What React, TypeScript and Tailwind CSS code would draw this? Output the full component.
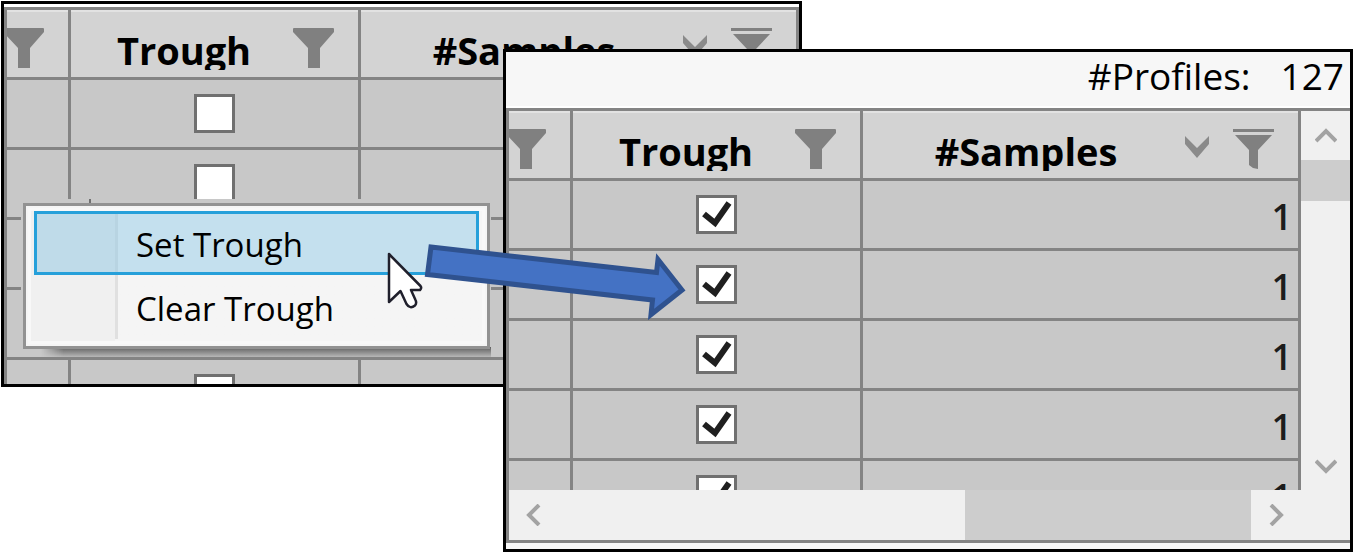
import clsx from "clsx";

interface CheckProps {
  label: string;
  checked: boolean;
}

interface GridProps {
  name: string;
  rows: number;
  checked: boolean;
  samples?: number;
}

const FunnelIcon = () => (
  <svg width="41" height="40" viewBox="0 0 41 40" className="shrink-0" fill="#808080">
    <path d="M1 0H40Q41 0 41 1V4L27 20V40H15V20L0 4V1Q0 0 1 0Z" />
  </svg>
);

const ActiveFunnelIcon = () => (
  <svg width="41" height="40" viewBox="0 0 41 40" className="shrink-0" fill="#808080">
    <path d="M0 0H41V3H0Z" />
    <path d="M2 6H39L25 21V40L20 39L16 36V21Z" />
  </svg>
);

const SortIcon = () => (
  <svg width="24" height="26" viewBox="0 0 24 26" className="shrink-0" fill="#8a8a8a">
    <path d="M0 0L12 12L24 0V8L12 22L0 8Z" />
  </svg>
);

const arrowTurns = {
  up: "",
  right: "rotate-90",
  down: "rotate-180",
  left: "-rotate-90",
};

const ScrollArrow = ({ direction }: { direction: keyof typeof arrowTurns }) => (
  <button
    type="button"
    aria-label={`Scroll ${direction}`}
    className="flex size-[49px] shrink-0 items-center justify-center"
  >
    <svg
      width="22"
      height="16"
      viewBox="0 0 22 16"
      className={arrowTurns[direction]}
      fill="none"
      stroke="#a3a3a3"
      strokeWidth="4"
    >
      <path d="M1 13L11 3L21 13" />
    </svg>
  </button>
);

const Check = ({ label, checked }: CheckProps) => (
  <label className="relative mx-auto block h-[39px] w-[41px]">
    <input
      type="checkbox"
      aria-label={label}
      defaultChecked={checked}
      className="peer block h-full w-full appearance-none border-3 border-[#707070] bg-white"
    />
    <svg
      viewBox="0 0 41 39"
      className="pointer-events-none absolute inset-0 hidden peer-checked:block"
      fill="none"
      stroke="#1f1f1f"
      strokeWidth="6"
    >
      <path d="M8 19L19 28L33 8" />
    </svg>
  </label>
);

const cell = "h-[70px] border-r-3 border-b-3 border-[#848484] p-0";
const headContent =
  "flex h-[67px] items-center overflow-hidden border-t-2 border-[#e2e2e2] pt-[6px] pr-6";
const headTitle =
  "min-w-0 flex-1 overflow-hidden pt-1 pl-1 text-center text-[38px] leading-10 font-bold";

const ProfileGrid = ({ name, rows, checked, samples }: GridProps) => (
  <table className="w-full table-fixed border-separate border-spacing-0 bg-[#c8c8c8]">
    <thead className="bg-[#d3d3d3]">
      <tr>
        <th className={clsx(cell, "w-16")}>
          <div className={clsx(headContent, "justify-end")}>
            <button type="button" aria-label="Filter">
              <FunnelIcon />
            </button>
          </div>
        </th>
        <th className={clsx(cell, "w-[290px]")}>
          <div className={headContent}>
            <span className={headTitle}>Trough</span>
            <button type="button" aria-label="Filter trough">
              <FunnelIcon />
            </button>
          </div>
        </th>
        <th className={cell}>
          <div className={clsx(headContent, "gap-6")}>
            <span className={clsx(headTitle, "-mr-6")}>#Samples</span>
            <button type="button" aria-label="Sort samples">
              <SortIcon />
            </button>
            <button type="button" aria-label="Filter samples">
              <ActiveFunnelIcon />
            </button>
          </div>
        </th>
      </tr>
    </thead>
    <tbody>
      {Array.from({ length: rows }, (_, i) => (
        <tr key={i}>
          <td className={cell} />
          <td className={cell}>
            <Check label={`${name} ${i + 1}`} checked={checked} />
          </td>
          <td className={cell}>
            <div className="pt-1 pr-[6px] text-right text-4xl font-semibold text-[#1c1c1c]">
              {samples}
            </div>
          </td>
        </tr>
      ))}
    </tbody>
  </table>
);

const ContextMenu = () => (
  <div className="absolute top-[199px] left-[21px] h-[158px] w-[470px] bg-[#c8c8c8] pt-1 pl-[2px]">
    {/* Row lines left behind the popup */}
    <div className="absolute top-0 left-[68px] h-full w-[2px] bg-[#707070]" />
    <div className="absolute right-0 bottom-0 left-5 h-[10px] mask-l-from-95% bg-linear-to-b from-[#606060] to-[#b8b8b8]" />

    <div
      role="menu"
      className="relative h-[146px] w-[467px] border-3 border-[#929292] bg-[#f5f5f5] p-[2px] text-[33px]"
    >
      <div className="flex h-full flex-col border-[3px] border-[#f8f8f8] bg-linear-to-r from-[#f0f0f0] from-[84px] to-[#f5f5f5] to-[84px] px-[3px]">
        <button
          type="button"
          role="menuitem"
          className="flex h-16 w-full border-3 border-[#26a0da] bg-[#c4e0ee] text-left"
        >
          <span className="w-[81px] border-r-3 border-[#b8d4e2] bg-[#bfdbe9]" />
          <span className="pl-[18px] leading-[62px]">Set Trough</span>
        </button>
        <button type="button" role="menuitem" className="flex h-16 w-full pl-[3px] text-left">
          <span className="w-[81px] border-r-3 border-[#e0e0e0]" />
          <span className="pl-[18px] leading-[68px]">Clear Trough</span>
        </button>
      </div>
    </div>
  </div>
);

const Overlay = () => (
  <svg
    width="700"
    height="340"
    viewBox="0 0 700 340"
    className="pointer-events-none absolute top-0 left-0"
  >
    <path
      d="M389 254V302L400.500 291L406.500 304Q410 309.500 415 305.500Q417 303 415.500 300L411 290H420Q422 288 420.500 286Z"
      fill="white"
      stroke="#20202c"
      strokeWidth="2.500"
      strokeLinejoin="round"
    />
    <path
      d="M431 247L656.500 272.500L658 259.500L682 290L651 314.500L652.500 300L427.500 274.500Z"
      fill="#4472c4"
      stroke="#2f528f"
      strokeWidth="5"
    />
  </svg>
);

export default function App() {
  return (
    <main className="relative flow-root bg-white font-['Open_Sans','Noto_Sans',sans-serif] text-black">
      {/* Before */}
      <section className="absolute top-px left-px h-[386px] w-[801px] overflow-hidden border-3 border-black bg-white pt-[3px]">
        <div className="border-t-3 border-l-3 border-[#848484]">
          <ProfileGrid name="Unset trough" rows={5} checked={false} />
        </div>
      </section>
      <ContextMenu />

      {/* After */}
      <section className="relative mt-[49px] mr-px mb-px ml-[503px] border-3 border-black bg-[#f7f7f7] pb-[6px]">
        <header className="flex h-14 items-center justify-end gap-[30px] border-b-2 border-white pr-[6px] pb-[6px] text-[37px]">
          <span>#Profiles:</span>
          <span>127</span>
        </header>
        <div className="border-y-3 border-l-3 border-[#848484] bg-[#f0f0f0]">
          <div className="flex">
            <div className="h-[379px] min-w-0 flex-1 overflow-hidden">
              <ProfileGrid name="Set trough" rows={5} checked samples={1} />
            </div>
            <div className="flex w-[49px] flex-col">
              <ScrollArrow direction="up" />
              <div className="h-[41px] bg-[#cdcdcd]" />
              <div className="flex-1" />
              <ScrollArrow direction="down" />
            </div>
          </div>
          <div className="mr-[50px] flex h-[50px]">
            <ScrollArrow direction="left" />
            <div className="flex-1" />
            <div className="w-[286px] bg-[#cdcdcd]" />
            <ScrollArrow direction="right" />
          </div>
        </div>
      </section>

      <Overlay />
    </main>
  );
}
